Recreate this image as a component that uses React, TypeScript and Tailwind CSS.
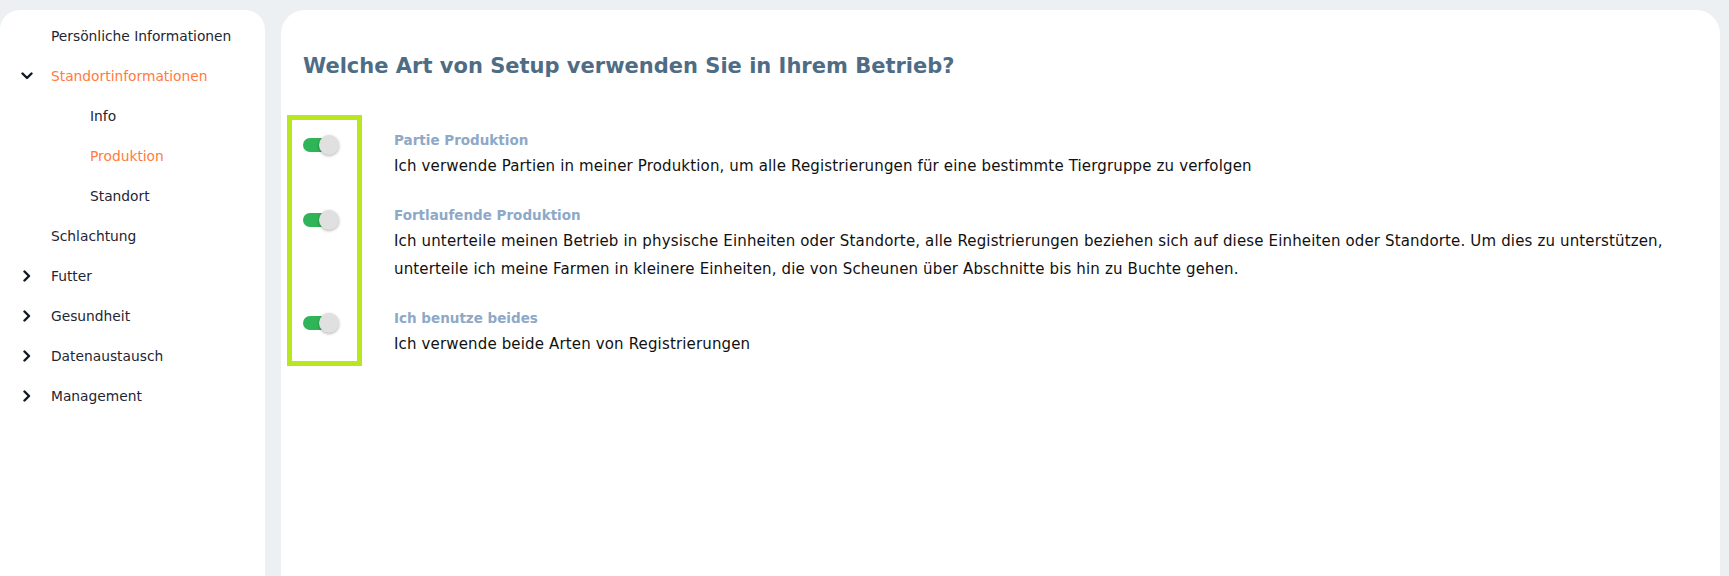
import React from "react";

const font = { fontFamily: '"DejaVu Sans", "Noto Sans", sans-serif' };

function ChevronDown() {
  return (
    <svg width="12" height="8" viewBox="0 0 12 8" className="block">
      <polyline points="1.5,1.5 6,6 10.5,1.5" fill="none" stroke="#111827" strokeWidth="2.4" strokeLinecap="round" strokeLinejoin="round" />
    </svg>
  );
}

function ChevronRight() {
  return (
    <svg width="8" height="12" viewBox="0 0 8 12" className="block">
      <polyline points="1.5,1.5 6,6 1.5,10.5" fill="none" stroke="#111827" strokeWidth="2.4" strokeLinecap="round" strokeLinejoin="round" />
    </svg>
  );
}

type NavItem = { label: string; level: 0 | 1; icon?: "down" | "right"; active?: boolean };

const nav: NavItem[] = [
  { label: "Persönliche Informationen", level: 0 },
  { label: "Standortinformationen", level: 0, icon: "down", active: true },
  { label: "Info", level: 1 },
  { label: "Produktion", level: 1, active: true },
  { label: "Standort", level: 1 },
  { label: "Schlachtung", level: 0 },
  { label: "Futter", level: 0, icon: "right" },
  { label: "Gesundheit", level: 0, icon: "right" },
  { label: "Datenaustausch", level: 0, icon: "right" },
  { label: "Management", level: 0, icon: "right" },
];

const options = [
  {
    title: "Partie Produktion",
    desc: "Ich verwende Partien in meiner Produktion, um alle Registrierungen für eine bestimmte Tiergruppe zu verfolgen",
  },
  {
    title: "Fortlaufende Produktion",
    desc: "Ich unterteile meinen Betrieb in physische Einheiten oder Standorte, alle Registrierungen beziehen sich auf diese Einheiten oder Standorte. Um dies zu unterstützen, unterteile ich meine Farmen in kleinere Einheiten, die von Scheunen über Abschnitte bis hin zu Buchte gehen.",
  },
  {
    title: "Ich benutze beides",
    desc: "Ich verwende beide Arten von Registrierungen",
  },
];

function Toggle() {
  return (
    <div className="relative w-[36px] h-[20px] flex items-center">
      <div className="w-[34px] h-[14px] rounded-full bg-[#2fb457]" />
      <div className="absolute right-0 top-0 w-[20px] h-[20px] rounded-full bg-[#e0e0e0] shadow-[0_1px_3px_rgba(0,0,0,0.3)]" />
    </div>
  );
}

export default function App() {
  return (
    <div className="w-full h-[576px] bg-[#edf0f3] flex gap-4 pt-[10px] pr-[9px] overflow-hidden" style={font}>
      <aside className="w-[265px] shrink-0 bg-white rounded-t-[20px] pt-[6px]">
        {nav.map((n) => (
          <div key={n.label} className="h-10 flex items-center">
            <div className="w-[51px] flex justify-center pl-[3px]">
              {n.icon === "down" && <ChevronDown />}
              {n.icon === "right" && <ChevronRight />}
            </div>
            <span
              className={`text-[13.8px] ${n.level === 1 ? "pl-[39px]" : ""} ${n.active ? "text-[#ff7b3d]" : "text-[#1f2633]"}`}
            >
              {n.label}
            </span>
          </div>
        ))}
      </aside>
      <main className="relative flex-1 bg-white rounded-t-3xl pt-[42px] pl-[22px] pr-[24px]">
        <h1 className="text-[21px] leading-[28px] font-semibold text-[#4f6c85]">
          Welche Art von Setup verwenden Sie in Ihrem Betrieb?
        </h1>
        <div className="mt-[50px] flex flex-col gap-[25px]">
          {options.map((o) => (
            <div key={o.title} className="flex">
              <div className="w-[91px] shrink-0 pt-[5px]">
                <Toggle />
              </div>
              <div>
                <div className="text-[13.5px] leading-[20px] font-semibold text-[#8ea8c7]">{o.title}</div>
                <div className="mt-[2px] text-[15px] tracking-[0.15px] leading-[28px] text-[#111111]">{o.desc}</div>
              </div>
            </div>
          ))}
        </div>
        <div className="absolute left-[6px] top-[105px] w-[75px] h-[251px] border-[5px] border-[#b8e61f]" />
      </main>
    </div>
  );
}
